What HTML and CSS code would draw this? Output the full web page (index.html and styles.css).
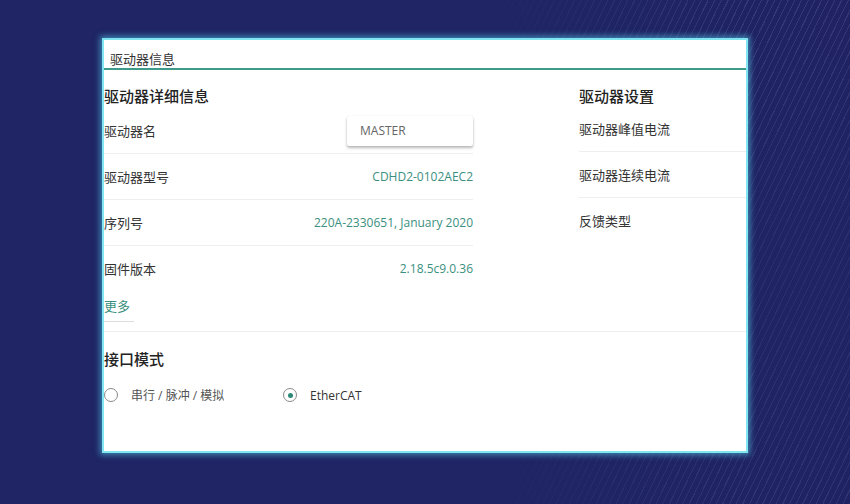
FILE: index.html
```html
<!DOCTYPE html>
<html lang="zh-CN">
<head>
<meta charset="utf-8">
<title>驱动器信息</title>
<link rel="stylesheet" href="styles.css">
</head>
<body>
<div class="stage">
  <div class="panel">
    <div class="tab-header">驱动器信息</div>
    <div class="columns">
      <section class="col-left">
        <h2 class="heading">驱动器详细信息</h2>
        <div class="row">
          <span class="label">驱动器名</span>
          <div class="input-box">MASTER</div>
        </div>
        <div class="row">
          <span class="label">驱动器型号</span>
          <span class="value">CDHD2-0102AEC2</span>
        </div>
        <div class="row">
          <span class="label">序列号</span>
          <span class="value">220A-2330651, January 2020</span>
        </div>
        <div class="row last">
          <span class="label">固件版本</span>
          <span class="value">2.18.5c9.0.36</span>
        </div>
        <div class="more">更多</div>
      </section>
      <section class="col-right">
        <h2 class="heading">驱动器设置</h2>
        <div class="row-r">驱动器峰值电流</div>
        <div class="row-r">驱动器连续电流</div>
        <div class="row-r last">反馈类型</div>
      </section>
    </div>
    <section class="interface">
      <h2 class="heading">接口模式</h2>
      <div class="radios">
        <div class="radio">
          <span class="circle"></span>
          <span class="radio-label muted">串行 / 脉冲 / 模拟</span>
        </div>
        <div class="radio checked">
          <span class="circle"><span class="dot"></span></span>
          <span class="radio-label">EtherCAT</span>
        </div>
      </div>
    </section>
  </div>
</div>
</body>
</html>
```
FILE: styles.css
```css
html, body {
  margin: 0;
  padding: 0;
}
body {
  width: 850px;
  height: 504px;
  overflow: hidden;
  font-family: "Open Sans", "Noto Sans CJK SC", sans-serif;
  background-color: #1f2464;
  background-image:
    linear-gradient(to bottom, rgba(31, 37, 101, 0) 0%, rgba(31, 37, 101, 0.55) 55%, rgba(31, 37, 101, 0.2) 100%),
    linear-gradient(to right, #1f2565 0%, #1f2565 58%, rgba(31, 37, 101, 0) 86%),
    repeating-linear-gradient(116deg, rgba(165, 180, 255, 0.15) 0 1px, rgba(0, 0, 0, 0) 1px 6px),
    linear-gradient(to right, #1c2c6c 0%, #1f2564 60%, #202262 100%);
}
.stage {
  padding: 38px 0 0 102px;
}
.panel {
  width: 642px;
  height: 411px;
  background: #ffffff;
  border: 2px solid #7fe6f2;
  box-shadow: 0 0 6px 2px rgba(90, 215, 240, 0.55);
  display: flex;
  flex-direction: column;
  color: #333;
}
.tab-header {
  height: 28px;
  line-height: 37px;
  padding-left: 6px;
  font-size: 13px;
  color: #333;
  border-bottom: 2px solid #3e9a8b;
  font-family: "Noto Sans CJK SC", sans-serif;
}
.columns {
  display: flex;
  gap: 106px;
}
.heading {
  margin: 0;
  padding-top: 16px;
  font-size: 15px;
  line-height: 20px;
  font-weight: 500;
  color: #222;
  font-family: "Noto Sans CJK SC", sans-serif;
}
.col-left {
  width: 369px;
}
.col-left .heading {
  margin-bottom: 2px;
}
.row {
  height: 45px;
  display: flex;
  align-items: center;
  justify-content: space-between;
  border-bottom: 1px solid #eeeeee;
}
.row.last {
  border-bottom: none;
}
.label {
  font-size: 13px;
  color: #333;
  font-family: "Noto Sans CJK SC", sans-serif;
}
.value {
  font-size: 12px;
  color: #3b8f80;
}
.input-box {
  width: 113px;
  height: 30px;
  padding-left: 13px;
  line-height: 30px;
  font-size: 12px;
  color: #666;
  background: #fff;
  box-shadow: 0 2px 3px rgba(0, 0, 0, 0.28), 0 0 1px rgba(0, 0, 0, 0.12);
  border-radius: 2px;
}
.more {
  width: 30px;
  margin-top: 6px;
  padding-bottom: 6px;
  line-height: 18px;
  font-size: 13px;
  color: #3b8f80;
  border-bottom: 1px solid #dddddd;
  font-family: "Noto Sans CJK SC", sans-serif;
}
.col-right {
  flex: 1;
}
.row-r {
  height: 45px;
  display: flex;
  align-items: center;
  font-size: 13px;
  color: #333;
  border-bottom: 1px solid #eeeeee;
  font-family: "Noto Sans CJK SC", sans-serif;
}
.row-r.last {
  border-bottom: none;
}
.interface {
  margin-top: 9px;
  border-top: 1px solid #eeeeee;
}
.interface .heading {
  padding-top: 17px;
}
.radios {
  display: flex;
  margin-top: 16px;
  height: 20px;
}
.radio {
  display: flex;
  align-items: center;
}
.radio:first-child {
  width: 179px;
}
.circle {
  width: 12px;
  height: 12px;
  border: 1px solid #8a8a8a;
  border-radius: 50%;
  display: flex;
  align-items: center;
  justify-content: center;
  margin-right: 13px;
}
.dot {
  width: 5px;
  height: 5px;
  border-radius: 50%;
  background: #2c8a78;
}
.radio-label {
  font-size: 12px;
  color: #333;
  font-family: "Open Sans", "Noto Sans CJK SC", sans-serif;
}
.radio-label.muted {
  color: #555;
}
```
